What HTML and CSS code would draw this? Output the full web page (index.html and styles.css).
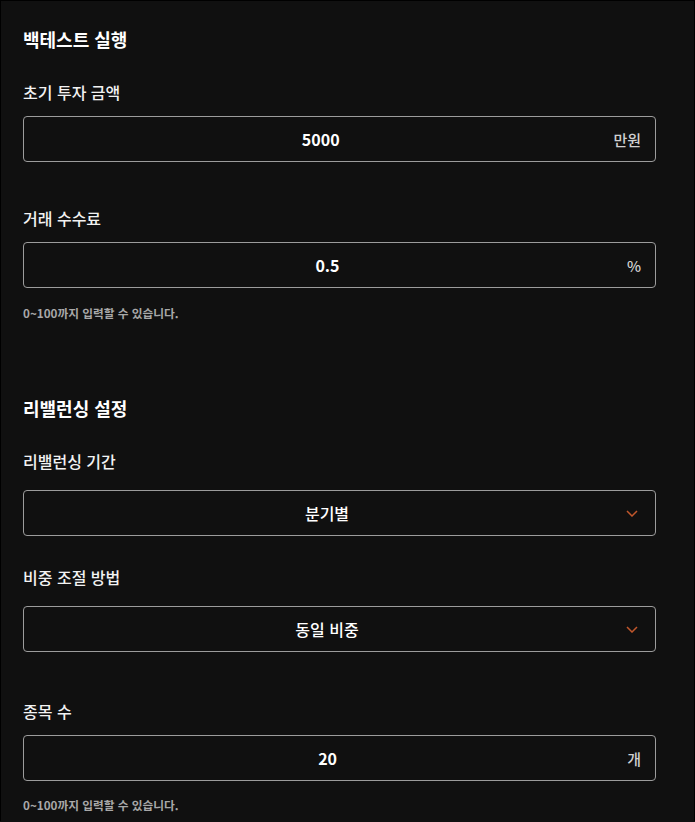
FILE: index.html
```html
<!DOCTYPE html>
<html lang="ko">
<head>
  <meta charset="UTF-8" />
  <title>백테스트 설정</title>
  <link rel="stylesheet" href="styles.css">
</head>
<body>

  <div class="panel">
    <h2 class="section-title">백테스트 실행</h2>

    <div class="field">
      <label class="field-label">초기 투자 금액</label>
      <div class="input-box">
        <span class="input-value">5000</span>
        <span class="input-unit">만원</span>
      </div>
    </div>

    <div class="field field-gap">
      <label class="field-label">거래 수수료</label>
      <div class="input-box">
        <span class="input-value">0.5</span>
        <span class="input-unit">%</span>
      </div>
      <p class="helper">0~100까지 입력할 수 있습니다.</p>
    </div>

    <h2 class="section-title section-next">리밸런싱 설정</h2>

    <div class="field">
      <label class="field-label select-label">리밸런싱 기간</label>
      <div class="select-box">
        <span class="select-value">분기별</span>
        <svg class="chevron" width="12" height="7" viewBox="0 0 12 7"><path d="M1 1l5 5 5-5" fill="none" stroke="#c1572c" stroke-width="1.5"/></svg>
      </div>
    </div>

    <div class="field select-gap">
      <label class="field-label select-label">비중 조절 방법</label>
      <div class="select-box">
        <span class="select-value">동일 비중</span>
        <svg class="chevron" width="12" height="7" viewBox="0 0 12 7"><path d="M1 1l5 5 5-5" fill="none" stroke="#c1572c" stroke-width="1.5"/></svg>
      </div>
    </div>

    <div class="field wide-gap">
      <label class="field-label">종목 수</label>
      <div class="input-box">
        <span class="input-value">20</span>
        <span class="input-unit">개</span>
      </div>
      <p class="helper helper-last">0~100까지 입력할 수 있습니다.</p>
    </div>
  </div>

</body>
</html>
```

FILE: styles.css
```css
html, body {
  margin: 0;
  background-color: #101010;
}

body {
  font-family: "Noto Sans CJK KR", "Noto Sans", sans-serif;
  color: #f2f2f2;
}

.panel {
  border: 1px solid #000;
  border-bottom: none;
  min-height: 821px;
  box-sizing: border-box;
  padding: 24px 38px 0 22px;
}

.section-title {
  margin: 0 0 27px;
  font-size: 18px;
  line-height: 28px;
  font-weight: 700;
  color: #fff;
}

.section-next {
  margin-top: 73px;
}

.field-label {
  display: block;
  font-size: 16px;
  line-height: 24px;
  font-weight: 500;
  margin-bottom: 12px;
}

.select-label {
  margin-bottom: 17px;
}

.field-gap {
  margin-top: 44px;
}

.select-gap {
  margin-top: 29px;
}

.wide-gap {
  margin-top: 47px;
}

.input-box,
.select-box {
  display: flex;
  align-items: center;
  gap: 10px;
  height: 46px;
  box-sizing: border-box;
  padding: 0 14px;
  border: 1px solid #9c9c9c;
  border-radius: 4px;
}

.input-value,
.select-value {
  flex: 1;
  text-align: center;
  font-size: 16px;
  font-weight: 600;
  color: #fff;
}

.select-value {
  font-weight: 500;
}

.input-unit {
  font-size: 15px;
  font-weight: 500;
  color: #d0d0d0;
}

.chevron {
  margin-right: 3px;
}

.helper {
  margin: 17px 0 0;
  font-size: 11.7px;
  line-height: 16px;
  font-weight: 600;
  color: #a8a8a8;
}

.helper-last {
  margin-top: 16px;
}
```
